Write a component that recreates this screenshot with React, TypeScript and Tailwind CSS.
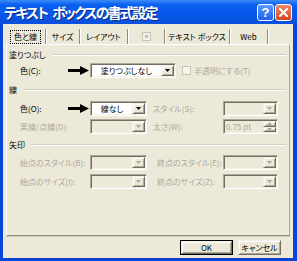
import React from "react";

const FONT = "font-['Noto_Sans_CJK_JP','Noto_Sans_CJK_SC',sans-serif] [font-feature-settings:'palt']";

const Arrow = () => (
  <svg width="21" height="9" viewBox="0 0 21 9" className="block">
    <path d="M0 3h12V0l9 4.5L12 9V6H0z" fill="#000" />
  </svg>
);

const Tri = ({ color, up }: { color: string; up?: boolean }) => (
  <svg width="5" height="3" viewBox="0 0 5 3" className="block">
    <path d={up ? "M0 3h5L2.5 0z" : "M0 0h5L2.5 3z"} fill={color} />
  </svg>
);

const Raised = ({ children, className }: { children?: React.ReactNode; className?: string }) => (
  <div
    className={
      "flex items-center justify-center bg-[#ece9d8] border border-t-[#f1efe2] border-l-[#f1efe2] border-r-[#716f64] border-b-[#716f64] shadow-[inset_1px_1px_0_#ffffff,inset_-1px_-1px_0_#aca899] " +
      (className ?? "")
    }
  >
    {children}
  </div>
);

function Field({ w, enabled, text, spin }: { w: string; enabled?: boolean; text?: string; spin?: boolean }) {
  return (
    <div
      className={
        "h-[15px] flex items-stretch border border-t-[#aca899] border-l-[#aca899] border-r-white border-b-white shadow-[inset_1px_1px_0_#716f64,inset_-1px_-1px_0_#f1efe2] p-[1px] " +
        (enabled ? "bg-white " : "bg-[#ece9d8] ") +
        w
      }
    >
      <div
        className={
          "flex-1 flex items-center text-[8px] leading-none " +
          (enabled ? "text-black justify-center" : "text-[#aca899] pl-[1px]")
        }
      >
        {text}
      </div>
      {spin ? (
        <div className="w-[13px] flex flex-col">
          <Raised className="flex-1">
            <Tri color="#aca899" up />
          </Raised>
          <Raised className="flex-1">
            <Tri color="#aca899" />
          </Raised>
        </div>
      ) : (
        <Raised className="w-[13px]">
          <Tri color={enabled ? "#000" : "#aca899"} />
        </Raised>
      )}
    </div>
  );
}

function Header({ label, mt }: { label: string; mt: string }) {
  return (
    <div className={"h-[12px] flex items-center pl-[1px] pr-[3px] " + mt}>
      <span className="text-[8px] leading-none text-black whitespace-nowrap">{label}</span>
      <div className="flex-1 ml-[6px] h-[2px] border-t border-t-[#d0d0bf] border-b border-b-white" />
    </div>
  );
}

function Label({ text, enabled, arrow, w, pl }: { text: string; enabled?: boolean; arrow?: boolean; w: string; pl?: string }) {
  return (
    <div className={"flex items-center h-full " + w + " " + (pl ?? "")}>
      <span
        className={
          "text-[8px] leading-none whitespace-nowrap " + (enabled ? "text-black" : "text-[#aca899]")
        }
      >
        {text}
      </span>
      {arrow && (
        <div className="ml-auto mr-[1px]">
          <Arrow />
        </div>
      )}
    </div>
  );
}

export default function App() {
  const tabs: { label: React.ReactNode; w: string }[] = [
    { label: <span className="px-[3px] py-[2px] outline outline-1 outline-dotted outline-black">色と線</span>, w: "w-[40px]" },
    { label: "サイズ", w: "w-[34px]" },
    { label: "レイアウト", w: "w-[48px]" },
    {
      label: (
        <span className="block w-[9px] h-[9px] border border-[#c8c4b4] bg-[#f4f2e8] relative">
          <span className="absolute left-[2px] top-[2px] w-[3px] h-[3px] bg-[#c8c4b4]" />
        </span>
      ),
      w: "w-[37px]",
    },
    { label: "テキスト ボックス", w: "w-[65px]" },
    { label: "Web", w: "w-[38px]" },
  ];

  return (
    <div className={"w-[297px] h-[261px] flex flex-col bg-[#0845d6] overflow-hidden " + FONT}>
      {/* Title bar */}
      <div className="h-[24px] flex items-center bg-[linear-gradient(to_bottom,#3a8cf7_0%,#0a5ff0_20%,#0757ea_60%,#0a50dc_100%)] pl-[4px] pr-[5px]">
        <div className="flex gap-[5px] text-white text-[14px] font-bold tracking-[-1.8px] leading-none [text-shadow:1px_1px_0_#0a2a8a] whitespace-nowrap">
          <span>テキスト</span>
          <span>ボックスの書式設定</span>
        </div>
        <div className="ml-auto flex gap-[1px]">
          <div className="w-[17px] h-[17px] rounded-[3px] border border-white bg-[linear-gradient(to_bottom,#5f9bff,#1e5ee8)] flex items-center justify-center text-white text-[13px] font-bold font-['Liberation_Sans',sans-serif] leading-none">
            ?
          </div>
          <div className="w-[17px] h-[17px] rounded-[3px] border border-white bg-[linear-gradient(to_bottom,#f08a6a,#d8441e)] flex items-center justify-center">
            <svg width="9" height="9" viewBox="0 0 9 9">
              <path d="M1 1l7 7M8 1l-7 7" stroke="#fff" strokeWidth="2" strokeLinecap="square" />
            </svg>
          </div>
        </div>
      </div>

      {/* Body */}
      <div className="flex-1 ml-[3px] mr-[4px] mb-[3px] bg-[#ece9d8] flex flex-col px-[3px] pt-[3px]">
        {/* Tabs */}
        <div className="h-[17px] flex items-stretch">
          {tabs.map((t, i) => (
            <div
              key={i}
              className={
                "flex items-center justify-center text-[8px] leading-none text-black whitespace-nowrap mt-[2px] border-r border-r-[#8f8c7e] shadow-[1px_0_0_#ffffff] " +
                t.w
              }
            >
              {t.label}
            </div>
          ))}
        </div>

        {/* Panel */}
        <div className="h-[192px] border border-t-white border-l-white border-r-[#aca899] border-b-[#8f8c7e] shadow-[0_1px_0_#d0cdbf] pl-[1px] flex flex-col">
          <Header label="塗りつぶし" mt="mt-[4px]" />
          {/* Row 1 */}
          <div className="h-[15px] mt-[2px] flex items-center pl-[12px]">
            <Label text="色(C):" enabled arrow w="w-[70px]" />
            <Field w="w-[86px]" enabled text="塗りつぶしなし" />
            <div className="ml-[6px] w-[9px] h-[9px] border border-[#c8c4b4] bg-[#f4f3ee]" />
            <span className="ml-[3px] text-[8px] leading-none text-[#aca899] whitespace-nowrap">半透明にする(T)</span>
          </div>

          <Header label="線" mt="mt-[6px]" />
          <div className="h-[15px] mt-[5px] flex items-center pl-[12px]">
            <Label text="色(O):" enabled arrow w="w-[70px]" />
            <Field w="w-[57px]" enabled text="線なし" />
            <Label text="スタイル(S):" w="w-[76px]" pl="pl-[6px]" />
            <Field w="w-[55px]" />
          </div>
          <div className="h-[15px] mt-[3px] flex items-center pl-[12px]">
            <Label text="実線/点線(D):" w="w-[70px]" />
            <Field w="w-[57px]" />
            <Label text="太さ(W):" w="w-[76px]" pl="pl-[6px]" />
            <Field w="w-[55px]" text="0.75 pt" spin />
          </div>

          <Header label="矢印" mt="mt-[5px]" />
          <div className="h-[15px] mt-[4px] flex items-center pl-[12px]">
            <Label text="始点のスタイル(B):" w="w-[70px]" />
            <Field w="w-[57px]" />
            <Label text="終点のスタイル(E):" w="w-[76px]" pl="pl-[10px]" />
            <Field w="w-[55px]" />
          </div>
          <div className="h-[15px] mt-[4px] flex items-center pl-[12px]">
            <Label text="始点のサイズ(I):" w="w-[70px]" />
            <Field w="w-[57px]" />
            <Label text="終点のサイズ(Z):" w="w-[76px]" pl="pl-[10px]" />
            <Field w="w-[55px]" />
          </div>
        </div>

        {/* Buttons */}
        <div className="mt-[4px] flex justify-end gap-[5px] pr-[9px]">
          <div className="w-[53px] h-[15px] border border-black">
            <Raised className="w-full h-full text-[8px] leading-none text-black">OK</Raised>
          </div>
          <Raised className="w-[43px] h-[15px] text-[8px] leading-none text-black">キャンセル</Raised>
        </div>
      </div>
    </div>
  );
}
